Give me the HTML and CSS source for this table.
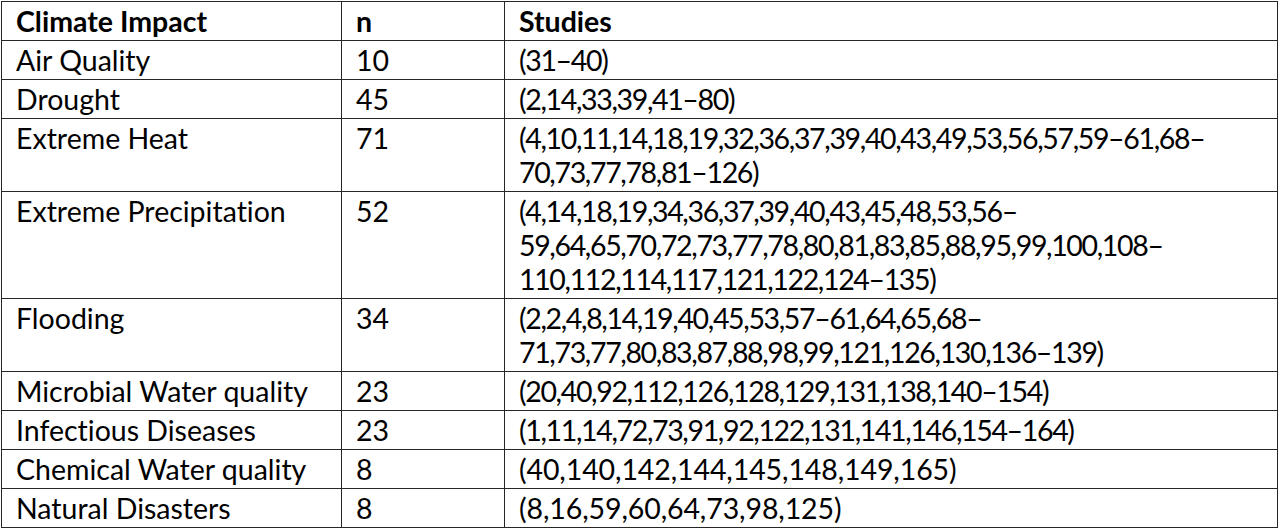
FILE: index.html
```html
<!DOCTYPE html>
<html lang="en">
<head>
<meta charset="utf-8">
<title>Climate Impact Studies</title>
<link rel="stylesheet" href="styles.css">
</head>
<body>
<table class="impact-table">
  <colgroup>
    <col class="col-impact">
    <col class="col-n">
    <col class="col-studies">
  </colgroup>
  <thead>
    <tr><th>Climate Impact</th><th>n</th><th>Studies</th></tr>
  </thead>
  <tbody>
    <tr><td>Air Quality</td><td>10</td><td class="refs">(31–40)</td></tr>
    <tr><td>Drought</td><td>45</td><td class="refs">(2,14,33,39,41–80)</td></tr>
    <tr><td>Extreme Heat</td><td>71</td><td class="refs">(4,10,11,14,18,19,32,36,37,39,40,43,49,53,56,57,59–61,68–<br>70,73,77,78,81–126)</td></tr>
    <tr><td>Extreme Precipitation</td><td>52</td><td class="refs">(4,14,18,19,34,36,37,39,40,43,45,48,53,56–<br>59,64,65,70,72,73,77,78,80,81,83,85,88,95,99,100,108–<br>110,112,114,117,121,122,124–135)</td></tr>
    <tr><td>Flooding</td><td>34</td><td class="refs">(2,2,4,8,14,19,40,45,53,57–61,64,65,68–<br>71,73,77,80,83,87,88,98,99,121,126,130,136–139)</td></tr>
    <tr><td>Microbial Water quality</td><td>23</td><td class="refs">(20,40,92,112,126,128,129,131,138,140–154)</td></tr>
    <tr><td>Infectious Diseases</td><td>23</td><td class="refs">(1,11,14,72,73,91,92,122,131,141,146,154–164)</td></tr>
    <tr><td>Chemical Water quality</td><td>8</td><td class="refs refs-wide">(40,140,142,144,145,148,149,165)</td></tr>
    <tr><td>Natural Disasters</td><td>8</td><td class="refs refs-wide">(8,16,59,60,64,73,98,125)</td></tr>
  </tbody>
</table>
</body>
</html>
```

FILE: styles.css
```css
html, body {
  margin: 0;
  padding: 0;
  background: #ffffff;
}

body {
  padding: 1px 0 0 1px;
  font-family: "Lato", "Open Sans", "Liberation Sans", sans-serif;
  font-variant-ligatures: none;
  color: #000000;
}

.impact-table {
  border-collapse: collapse;
  table-layout: fixed;
  width: 1276px;
  font-size: 28.5px;
  line-height: 34px;
}

.col-impact { width: 340px; }
.col-n { width: 163px; }
.col-studies { width: 773px; }

.impact-table th,
.impact-table td {
  border: 1px solid #262626;
  padding: 2px 0 2px 14px;
  text-align: left;
  vertical-align: top;
  white-space: nowrap;
  overflow: hidden;
}

.impact-table th {
  font-weight: 700;
}

.impact-table td {
  font-weight: 400;
}

.impact-table .refs {
  letter-spacing: -1.35px;
}

.impact-table .refs-wide {
  letter-spacing: -0.1px;
}
```
